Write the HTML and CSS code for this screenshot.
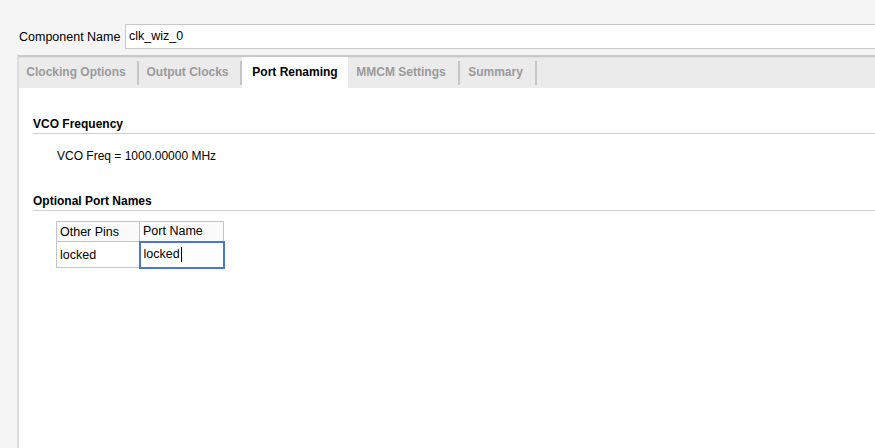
FILE: index.html
```html
<!DOCTYPE html>
<html>
<head>
<meta charset="utf-8">
<link rel="stylesheet" href="styles.css">
</head>
<body>
<div class="name-row">
  <span class="name-label">Component Name</span>
  <div class="name-input">clk_wiz_0</div>
</div>
<div class="panel">
  <div class="tabs">
    <div class="tab t1">Clocking Options</div>
    <div class="sep"></div>
    <div class="tab t2">Output Clocks</div>
    <div class="sep"></div>
    <div class="tab active t3">Port Renaming</div>
    <div class="tab t4">MMCM Settings</div>
    <div class="sep"></div>
    <div class="tab t5">Summary</div>
    <div class="sep"></div>
  </div>
  <div class="content">
    <div class="section-title">VCO Frequency</div>
    <div class="vco">VCO Freq = 1000.00000 MHz</div>
    <div class="section-title second">Optional Port Names</div>
    <table class="ports">
      <tr class="head"><td class="c1">Other Pins</td><td class="c2">Port Name</td></tr>
      <tr class="row"><td class="c1">locked</td><td class="c2 editing"><span class="edit">locked<span class="caret"></span></span></td></tr>
    </table>
  </div>
</div>
</body>
</html>
```
FILE: styles.css
```css
html, body {
  margin: 0;
  padding: 0;
  height: 100%;
}
body {
  background: #f5f5f5;
  font-family: "Liberation Sans", Arial, sans-serif;
  font-size: 12px;
  color: #000;
  overflow: hidden;
  display: flex;
  flex-direction: column;
}
.name-row {
  display: flex;
  align-items: center;
  height: 27px;
  margin-top: 23px;
  padding-left: 19px;
}
.name-label {
  width: 106px;
  font-size: 12.5px;
}
.name-input {
  flex: 1;
  height: 23px;
  line-height: 23px;
  background: #fff;
  border: 1px solid #c9c9c9;
  border-right: none;
  padding-left: 3px;
  font-size: 12.5px;
}
.panel {
  margin-top: 5px;
  margin-left: 17px;
  flex: 1;
  display: flex;
  flex-direction: column;
  border-top: 2px solid #c8c8c8;
  border-left: 2px solid #dcdcdc;
}
.tabs {
  display: flex;
  align-items: center;
  height: 31px;
  background: #ebebeb;
  border-top: 1px solid #e2e2e2;
  box-sizing: border-box;
}
.tab {
  height: 100%;
  display: flex;
  align-items: center;
  justify-content: center;
  font-weight: bold;
  color: #9a9a9a;
  font-size: 12px;
  padding-bottom: 2px;
  box-sizing: border-box;
}
.t1 { width: 118px; padding-right: 4px; }
.t2 { width: 101px; padding-right: 4px; }
.t3 { width: 106px; }
.t4 { width: 110px; padding-right: 4px; }
.t5 { width: 75px; padding-right: 4px; }
.tab.active {
  background: #fff;
  color: #000;
  height: calc(100% + 1px);
  margin-top: -1px;
  padding-bottom: 1px;
}
.sep {
  width: 2px;
  height: 24px;
  background: #c6c6c6;
}
.content {
  flex: 1;
  background: #fff;
  padding: 28px 0 0 14px;
}
.section-title {
  font-weight: bold;
  height: 17px;
  line-height: 17px;
  border-bottom: 1px solid #cfcfcf;
}
.section-title.second {
  margin-top: 29px;
}
.vco {
  padding-left: 24px;
  margin-top: 15px;
  height: 15px;
  line-height: 15px;
}
.ports {
  margin-top: 10px;
  margin-left: 23px;
  border-collapse: collapse;
  font-size: 12.5px;
}
.ports td {
  border: 1px solid #c4c4c4;
  padding: 0 0 0 3px;
  box-sizing: border-box;
}
.ports .c1 { width: 83px; }
.ports .c2 { width: 84px; }
.ports .head td {
  height: 20px;
  background: #fafafa;
}
.ports .row td {
  height: 26px;
}
.ports td.editing {
  border: 2px solid #4a78c8;
  padding-left: 3px;
}
.edit {
  display: inline-flex;
  align-items: center;
  margin-top: -4px;
}
.caret {
  display: inline-block;
  width: 1px;
  height: 15px;
  background: #000;
  margin-left: 1px;
}
```
